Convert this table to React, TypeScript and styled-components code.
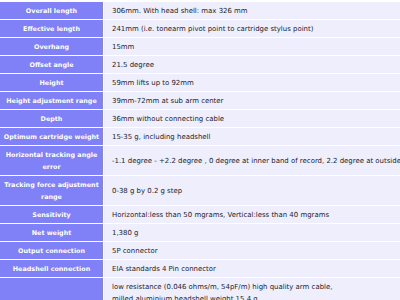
import React from 'react';
import styled, { createGlobalStyle } from 'styled-components';

const GlobalStyle = createGlobalStyle`
  html, body {
    margin: 0;
    padding: 0;
    background: #ffffff;
    overflow: hidden;
  }
`;

const SpecTable = styled.table`
  border-collapse: separate;
  border-spacing: 1px;
  margin: 1px 0 0 -1px;
  width: 520px;
  background: #ffffff;
  font-family: "DejaVu Sans", Verdana, sans-serif;
  table-layout: fixed;
`;

const Label = styled.th`
  width: 103px;
  box-sizing: border-box;
  background: #8080f7;
  color: #ffffff;
  font-weight: bold;
  font-size: 6.4px;
  line-height: 12px;
  text-align: center;
  vertical-align: middle;
  padding: 3px 1px 2px;
`;

const Value = styled.td`
  background: #eeeefc;
  color: #24242e;
  font-size: 6.95px;
  line-height: 12px;
  text-align: left;
  vertical-align: middle;
  padding: 3px 7px 2px 8px;
  white-space: nowrap;
`;

type Spec = { label: string; value: string[] };

const specs: Spec[] = [
  { label: 'Overall length', value: ['306mm. With head shell: max 326 mm'] },
  { label: 'Effective length', value: ['241mm (i.e. tonearm pivot point to cartridge stylus point)'] },
  { label: 'Overhang', value: ['15mm'] },
  { label: 'Offset angle', value: ['21.5 degree'] },
  { label: 'Height', value: ['59mm lifts up to 92mm'] },
  { label: 'Height adjustment range', value: ['39mm-72mm at sub arm center'] },
  { label: 'Depth', value: ['36mm without connecting cable'] },
  { label: 'Optimum cartridge weight', value: ['15-35 g, including headshell'] },
  {
    label: 'Horizontal tracking angle error',
    value: ['-1.1 degree - +2.2 degree , 0 degree at inner band of record, 2.2 degree at outside band of record'],
  },
  { label: 'Tracking force adjustment range', value: ['0-38 g by 0.2 g step'] },
  { label: 'Sensitivity', value: ['Horizontal:less than 50 mgrams, Vertical:less than 40 mgrams'] },
  { label: 'Net weight', value: ['1,380 g'] },
  { label: 'Output connection', value: ['5P connector'] },
  { label: 'Headshell connection', value: ['EIA standards 4 Pin connector'] },
  {
    label: 'Accessories',
    value: [
      'low resistance (0.046 ohms/m, 54pF/m) high quality arm cable,',
      'milled aluminium headshell weight 15.4 g.',
      'sub weight, arm rest, mounting template,',
      'hex wrench and instruction manual',
    ],
  },
];

const App = () => {
  return (
    <>
      <GlobalStyle />
      <SpecTable>
        <tbody>
          {specs.map((s) => (
            <tr key={s.label}>
              <Label>{s.label}</Label>
              <Value>
                {s.value.map((line, i) => (
                  <React.Fragment key={i}>
                    {i > 0 && <br />}
                    {line}
                  </React.Fragment>
                ))}
              </Value>
            </tr>
          ))}
        </tbody>
      </SpecTable>
    </>
  );
};

export default App;
